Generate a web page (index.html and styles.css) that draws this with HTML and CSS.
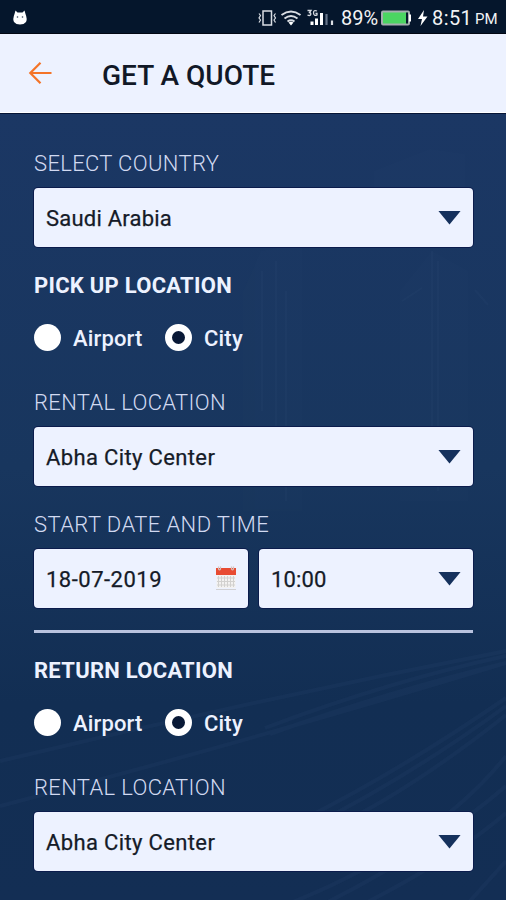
FILE: index.html
```html
<!DOCTYPE html>
<html lang="en">
<head>
<meta charset="utf-8">
<title>Get a Quote</title>
<link rel="stylesheet" href="styles.css">
</head>
<body>
<div class="screen">
  <div class="status">
    <svg class="bug" width="16" height="18" viewBox="0 0 16 18"><path d="M2.500 5L3.500 1.500L5.500 3.500H10.500L12.500 1.500L13.500 5Q15.500 10 14 13Q12 15.500 8 15.500T2 13Q.5 10 2.500 5Z" fill="#fff"/><circle cx="5.500" cy="8" r=".8" fill="#34435a"/><circle cx="10.500" cy="8" r=".8" fill="#34435a"/></svg>
    <svg class="tray" width="78" height="20" viewBox="0 0 78 20" fill="none" stroke="#d9dde3" stroke-width="1.500">
      <rect x="6" y="3" width="8.500" height="14"/><path d="M2 5.500L3.500 7.500L2 10L3.500 12L2 14.500M18.500 5.500L17 7.500L18.500 10L17 12L18.500 14.500" stroke-width="1.200"/>
      <path d="M24.500 7Q34 0 43.500 7M27.500 10.500Q34 5.500 40.500 10.500M30.500 13.500Q34 11 37.500 13.500" stroke-width="1.900"/><path d="M31.500 14.500Q34 13 36.500 14.500L34 17.500Z" fill="#fff" stroke="none"/>
      <path d="M50.500 2.500H54L52.500 4.500Q54.500 5 53.500 7Q52.500 8 50.500 7M60 3Q56.500 1.500 56.500 5Q57 8.500 60 7V5.500H58.500" stroke-width="1.300"/>
      <path d="M55 17V13.500M59.500 17V10.500M64.500 17V5" stroke="#fff" stroke-width="3"/><path d="M69.500 17V6" stroke="#66758a" stroke-width="2.200"/><path d="M75 17V12.500" stroke-width="2.200"/>
    </svg>
    <span class="percent">89%</span>
    <svg class="battery" width="50" height="20" viewBox="0 0 50 20"><rect x="2" y="3.500" width="27" height="13" rx="1" fill="#4bd562" stroke="#a6adb0" stroke-width="2"/><path d="M26 4.500H28V15.500H26Z" fill="#07182c"/><path d="M29 6.500H31V13.500H29Z" fill="#fff"/><path d="M44 2L38 11H42L40.500 18L47.500 8.500H43Z" fill="#fff"/></svg>
    <span class="time">8:51</span><span class="pm">PM</span>
  </div>
  <header class="bar">
    <svg class="back" width="24" height="24" viewBox="0 0 24 24" fill="none" stroke="#f47428" stroke-width="2.200"><path d="M23.500 12H2.500M12.500 1.700L2.300 12L12.500 22.300"/></svg>
    <h1 class="title">GET A QUOTE</h1>
  </header>
  <main class="form">
    <svg class="scenery" width="506" height="787" viewBox="0 113 506 787" fill="none">
      <g fill="#487090" opacity=".025"><path d="M374 170L430 148L465 153V190H374Z"/><path d="M261 250L302 243V510H243V290Z"/><path d="M400 290L432 250L468 270V500H400Z"/></g>
      <g stroke="#527799" opacity=".06" stroke-width="2"><path d="M262 270V410M276 260V480M286 290V500M432 250V430M438 260V490M402 300L422 287M475 289L488 304"/></g>
      <g stroke="#527799" opacity=".07" stroke-width="4"><path d="M0 760Q250 700 506 650M0 805Q250 740 506 662M265 727Q390 680 506 655M270 733Q390 690 506 662M300 820Q400 770 506 697M315 823Q410 775 506 705M330 828Q410 790 506 714M270 910Q430 850 506 755M320 905Q430 850 506 785M350 910Q450 860 506 812M470 900L506 860"/></g>
    </svg>
    <div class="content">
      <label class="label l1">SELECT COUNTRY</label>
      <div class="field"><span class="value v1">Saudi Arabia</span><i class="arrow"></i></div>
      <h2 class="heading">PICK UP LOCATION</h2>
      <div class="radios"><i class="radio"></i><span class="airport">Airport</span><i class="radio on"></i><span class="city">City</span></div>
      <label class="label">RENTAL LOCATION</label>
      <div class="field"><span class="value v2">Abha City Center</span><i class="arrow"></i></div>
      <label class="label l3">START DATE AND TIME</label>
      <div class="pair">
        <div class="field"><span class="value v3">18-07-2019</span>
          <svg class="calendar" width="22" height="26" viewBox="0 0 22 26"><path d="M1.500 10H20.500V23H1.500Z" fill="#f3f2f1"/><path d="M1 24.500H21" stroke="#d0d0d3"/><path d="M3.500 11V22M6.500 11V22M9.500 11V22M12.500 11V22M15.500 11V22M18.500 11V22M2 13H20M2 16.500H20M2 20H20" stroke="#d2d1cf" stroke-width="1"/><path d="M1 3H21V10H1Z" fill="#e84b32"/><path d="M3.500 1.500V4Q4.500 6 5.500 4V1.500M16.500 1.500V4Q17.500 6 18.500 4V1.500" fill="none" stroke="#d7c1bd" stroke-width="1.200"/></svg>
        </div>
        <div class="field"><span class="value v4">10:00</span><i class="arrow"></i></div>
      </div>
      <div class="rule"></div>
      <h2 class="heading h-return">RETURN LOCATION</h2>
      <div class="radios"><i class="radio"></i><span class="airport">Airport</span><i class="radio on"></i><span class="city">City</span></div>
      <label class="label">RENTAL LOCATION</label>
      <div class="field"><span class="value v2">Abha City Center</span><i class="arrow"></i></div>
    </div>
  </main>
</div>
</body>
</html>
```

FILE: styles.css
```css
* { box-sizing: border-box; }
body { margin: 0; font-family: Roboto, "Liberation Sans", sans-serif; }
.screen { width: 506px; height: 900px; overflow: hidden; display: flex; flex-direction: column; }
.status { height: 34px; flex: none; display: flex; align-items: center; background: #05162c; border-bottom: 1px solid #020713; color: #f2f3f5; padding: 2px 0 0 12px; white-space: nowrap; }
.bug { margin-right: 229px; flex: none; }
.tray { flex: none; }
.percent { width: 38px; margin-left: 6px; margin-right: 1px; font-size: 20px; line-height: 24px; }
.battery { flex: none; }
.time { width: 40px; margin-left: 2px; font-size: 20px; line-height: 24px; letter-spacing: .4px; }
.pm { font-size: 15px; line-height: 20px; margin: 3px 0 0 3px; }
.bar { height: 79px; flex: none; display: flex; align-items: center; background: #edf2ff; border-bottom: 1px solid #fff; padding-left: 28px; }
.back { flex: none; }
.title { margin: 5px 0 0 50px; font-size: 28px; line-height: 34px; font-weight: 500; color: #111827; white-space: nowrap; }
.form { position: relative; height: 787px; background: linear-gradient(#1b3764, #18365e 45%, #122e53 75%, #132e54); border-top: 1px solid #061537; }
.scenery { position: absolute; left: 0; top: 0; }
.content { position: relative; padding: 36px 33px 0 34px; display: flex; flex-direction: column; }
.label { height: 38px; font-size: 22px; line-height: 28px; font-weight: 300; letter-spacing: .34px; color: #d2daf1; white-space: nowrap; }
.field { height: 59px; flex: 1 0 59px; display: flex; align-items: center; justify-content: space-between; background: #edf2ff; border-radius: 4px; padding: 2px 12px 0 12px; box-shadow: 0 0 0 1px #0b1c4c; }
.value { font-size: 22px; line-height: 28px; color: #151b28; -webkit-text-stroke: .25px #151b28; white-space: nowrap; }
.v1 { letter-spacing: .22px; }
.v2 { letter-spacing: .36px; }
.v3 { letter-spacing: .5px; }
.v4 { letter-spacing: .15px; }
.arrow { width: 23px; height: 14px; margin-top: -2px; background: #15315d; clip-path: polygon(0 0, 100% 0, 50% 100%); }
.heading { margin: 25px 0 0; font-size: 22px; line-height: 28px; font-weight: 700; letter-spacing: .27px; color: #edf2ff; white-space: nowrap; }
.radios { display: flex; align-items: center; height: 28px; margin: 23px 0 38px; font-size: 22px; line-height: 28px; font-weight: 500; color: #edf2ff; }
.radio { width: 27px; height: 27px; border-radius: 50%; background: #fff; flex: none; }
.radio.on { border: 7px solid #fff; background: #091936; }
.airport { width: 104px; padding-left: 12px; margin-top: 3px; letter-spacing: .15px; }
.city { padding-left: 12px; margin-top: 3px; letter-spacing: .2px; }
.l3 { margin-top: 25px; letter-spacing: .42px; }
.pair { display: grid; grid-template-columns: 214px 214px; gap: 11px; }
.calendar { margin-right: -1px; margin-top: -4px; }
.rule { height: 3px; background: #b9c3df; margin-top: 22px; }
.h-return { margin-top: 24px; }
```
